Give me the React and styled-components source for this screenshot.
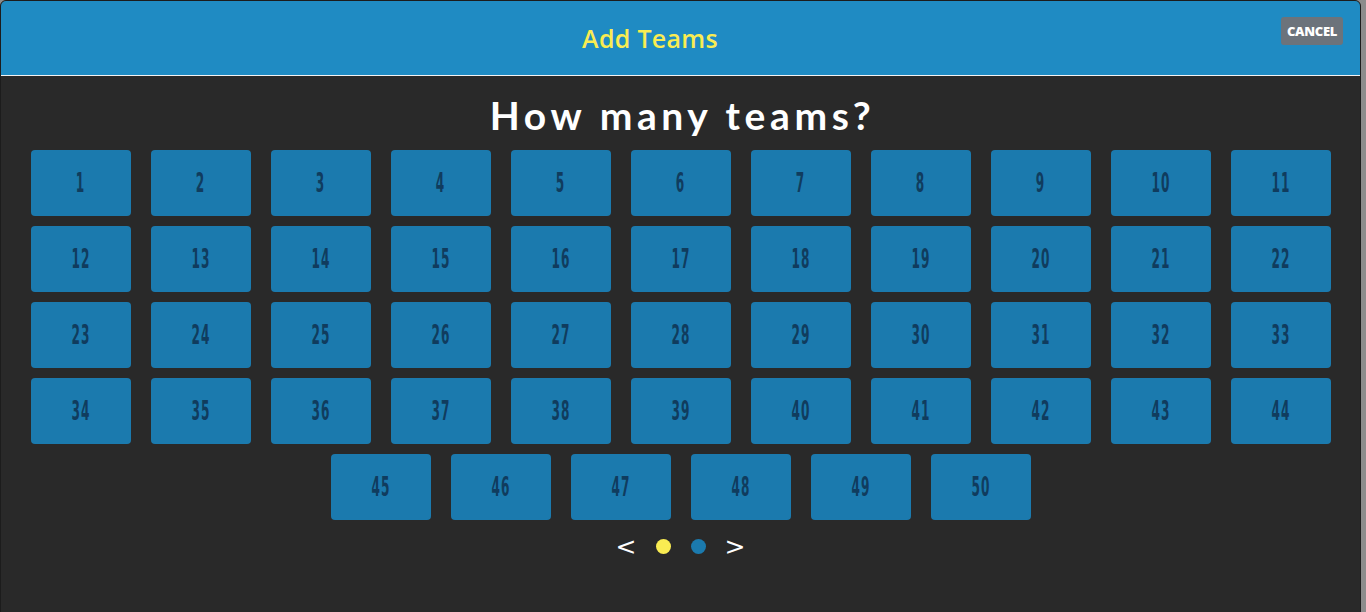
import React from "react";
import styled, { createGlobalStyle } from "styled-components";

const Global = createGlobalStyle`
  html, body { margin: 0; padding: 0; height: 100%; }
  body { background: #8c8c8c; overflow: hidden; font-family: "Lato", "Open Sans", sans-serif; }
  #root { height: 100%; }
`;

const Modal = styled.div`
  width: 1361px;
  height: 640px;
  box-sizing: border-box;
  border: 1px solid #1c1c1c;
  border-radius: 6px 6px 0 0;
  background: #292929;
  overflow: hidden;
  display: flex;
  flex-direction: column;
`;

const Header = styled.header`
  height: 74px;
  background: #1f8bc3;
  border-bottom: 1px solid #f2f2f2;
  display: flex;
  align-items: center;
  padding: 0 17px 0 18px;
  flex-shrink: 0;
`;

const Title = styled.h1`
  flex: 1;
  margin: 0;
  text-align: center;
  color: #f9ec52;
  font-family: "Open Sans", "Lato", sans-serif;
  font-weight: 600;
  font-size: 25px;
  letter-spacing: 0.3px;
`;

const CancelButton = styled.button`
  align-self: flex-start;
  margin-top: 16px;
  width: 62px;
  height: 28px;
  border: none;
  border-radius: 3px;
  background: #6c737b;
  color: #ffffff;
  font-family: "Open Sans", "Lato", sans-serif;
  font-weight: 800;
  font-size: 13px;
  letter-spacing: -0.3px;
  padding: 0;
  cursor: pointer;
`;

const Body = styled.main`
  display: flex;
  flex-direction: column;
  align-items: center;
  padding-top: 16px;
`;

const Question = styled.h2`
  margin: 0 0 12px;
  color: #ffffff;
  font-family: "Lato", sans-serif;
  font-weight: 700;
  font-size: 39px;
  line-height: 46px;
  letter-spacing: 4.6px;
  padding-left: 4px;
`;

const Grid = styled.div`
  width: 1300px;
  display: flex;
  flex-wrap: wrap;
  justify-content: center;
  gap: 10px 20px;
`;

const NumberButton = styled.button`
  width: 100px;
  height: 66px;
  border: none;
  border-radius: 4px;
  background: #1b7aae;
  display: flex;
  align-items: center;
  justify-content: center;
  padding: 0;
  cursor: pointer;
`;

const Digits = styled.span`
  display: inline-block;
  color: #103c5e;
  font-family: "DejaVu Sans Condensed", "DejaVu Sans", sans-serif;
  font-weight: 700;
  font-size: 27px;
  line-height: 1;
  transform: scaleX(0.5);
  letter-spacing: 2px;
  margin-top: -2px;
`;

const Pager = styled.nav`
  display: flex;
  align-items: center;
  margin-top: 14px;
`;

const Arrow = styled.span`
  color: #ffffff;
  font-family: "DejaVu Sans", sans-serif;
  font-weight: 400;
  font-size: 25px;
  line-height: 1;
  margin: ${(p) => p.$m};
`;

const Dot = styled.span`
  width: 15px;
  height: 15px;
  border-radius: 50%;
  background: ${(p) => (p.$active ? "#f9ec52" : "#1b7aae")};
  margin: 0 10px;
`;

export default function App() {
  const nums = Array.from({ length: 50 }, (_, i) => i + 1);
  return (
    <>
      <Global />
      <Modal>
        <Header>
          <Title>Add Teams</Title>
          <CancelButton>CANCEL</CancelButton>
        </Header>
        <Body>
          <Question>How many teams?</Question>
          <Grid>
            {nums.map((n) => (
              <NumberButton key={n}>
                <Digits>{n}</Digits>
              </NumberButton>
            ))}
          </Grid>
          <Pager>
            <Arrow $m="0 9px 0 0">&lt;</Arrow>
            <Dot $active />
            <Dot />
            <Arrow $m="0 0 0 9px">&gt;</Arrow>
          </Pager>
        </Body>
      </Modal>
    </>
  );
}
